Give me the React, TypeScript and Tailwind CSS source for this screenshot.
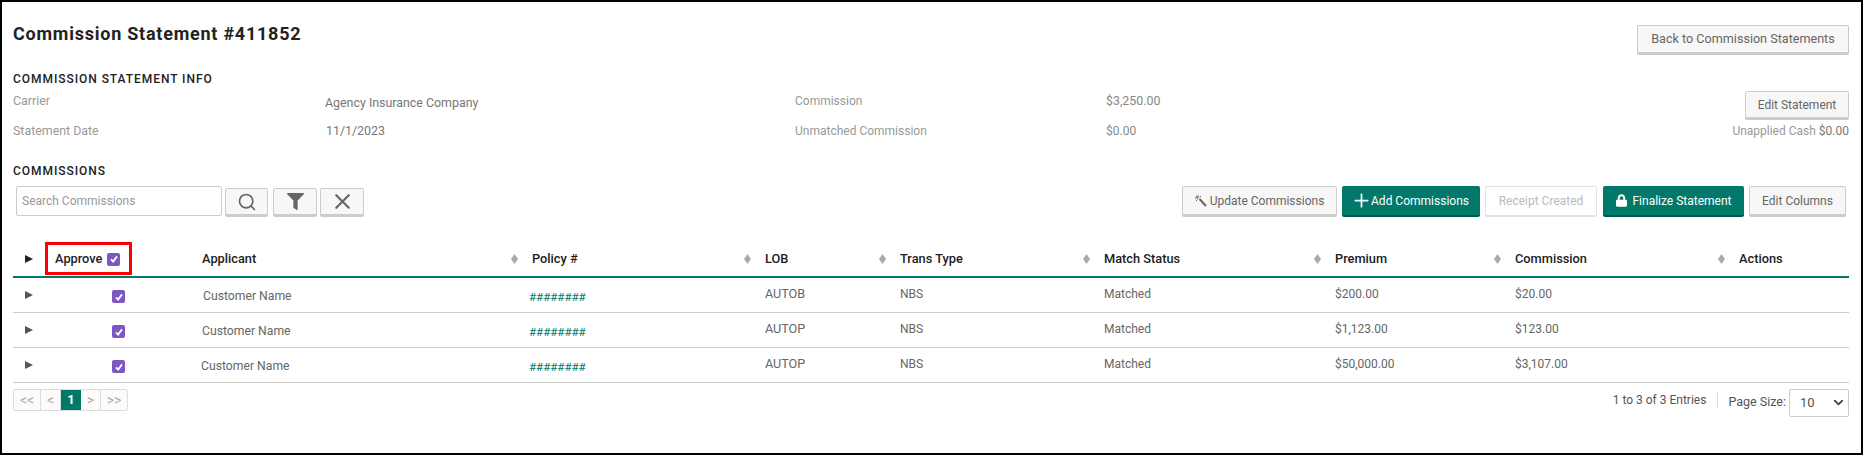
import { ChevronDown, Plus, Search, X } from 'lucide-react'
import type { ReactNode } from 'react'
import { FaFilter, FaLock } from 'react-icons/fa'

const gridCols =
  'grid grid-cols-[42px_147px_330px_233px_135px_204px_231px_180px_224px_1fr]'

const greyBtn =
  'flex items-center justify-center rounded-[2px] border border-b-[3px] border-[#ccc] bg-[#f7f7f7] text-[#666]'
const tealBtn =
  'flex h-[31px] items-center justify-center rounded-[2px] border-b-2 border-[#00594f] bg-[#00796b] text-[12px] text-white'

const rows = [
  { lob: 'AUTOB', premium: '$200.00', commission: '$20.00', nameClass: 'pl-px' },
  { lob: 'AUTOP', premium: '$1,123.00', commission: '$123.00', nameClass: '' },
  { lob: 'AUTOP', premium: '$50,000.00', commission: '$3,107.00', nameClass: '-ml-px' },
]

const Triangle = ({ className }: { className: string }) => (
  <svg viewBox="0 0 8 8" className={className}>
    <path d="M0 0 L8 4 L0 8 Z" fill="currentColor" />
  </svg>
)

const Diamond = () => (
  <svg viewBox="0 0 7 10" className="h-[10px] w-[7px] text-[#aaa]">
    <path d="M3.5 0 L7 5 L3.5 10 L0 5 Z" fill="currentColor" />
  </svg>
)

const Check = () => (
  <span className="flex h-[13px] w-[13px] items-center justify-center rounded-[2px] bg-[#7e57c2]">
    <svg viewBox="0 0 10 10" className="h-[10px] w-[10px]">
      <path d="M2 5.4 L4.1 7.6 L8 2.4" fill="none" stroke="white" strokeWidth="1.8" />
    </svg>
  </span>
)

const Wand = () => (
  <svg viewBox="0 0 12 12" className="h-[12px] w-[12px] text-[#666]">
    <path d="M4.5 4 L11 11" stroke="currentColor" strokeWidth="2" />
    <path d="M3 0 V3 M0 3 H3 M1 1 L3 3 M6 1 L4.5 2.5 M1 6 L2.5 4.5" stroke="currentColor" strokeWidth="1" />
  </svg>
)

const HeadCell = ({ children }: { children: ReactNode }) => (
  <div className="flex items-center justify-between pr-[14px] leading-[34px]">
    <span>{children}</span>
    <Diamond />
  </div>
)

const PageCell = ({ label, className }: { label: string; className: string }) => (
  <span className={`flex items-center justify-center border-r border-[#ddd] text-[14px] text-[#aaa] ${className}`}>
    {label}
  </span>
)

const App = () => {
  return (
    <div className="h-[455px] overflow-hidden border-2 border-black bg-white pl-[11px] pr-[12px] font-[Roboto,sans-serif]">
      <div className="flex items-start justify-between pt-[23px]">
        <h1 className="pt-px text-[18px] font-bold leading-[16px] tracking-[0.76px] text-[#222]">
          Commission Statement #411852
        </h1>
        <button className={`${greyBtn} h-[30px] w-[212px] text-[12.6px]`}>Back to Commission Statements</button>
      </div>

      <h2 className="mt-[16px] text-[12px] font-medium leading-[16px] tracking-[0.95px] text-[#222]">
        COMMISSION STATEMENT INFO
      </h2>

      <div className="mt-[4px] grid grid-cols-[312px_470px_311px_1fr] text-[12px] text-[#999]">
        <div className="h-[29px] pt-px text-[12.4px] leading-[18px]">Carrier</div>
        <div className="pt-[3px] text-[12.4px] leading-[18px] text-[#777]">Agency Insurance Company</div>
        <div className="pt-px leading-[18px]">Commission</div>
        <div className="flex items-start justify-between">
          <span className="pt-px text-[12.4px] leading-[18px] text-[#888]">$3,250.00</span>
          <button className={`${greyBtn} h-[29px] w-[104px] pt-px text-[12px]`}>Edit Statement</button>
        </div>
        <div className="h-[22px] text-[12.4px] leading-[22px]">Statement Date</div>
        <div className="pl-px text-[12.4px] leading-[22px] text-[#777]">11/1/2023</div>
        <div className="leading-[22px]">Unmatched Commission</div>
        <div className="flex justify-between leading-[22px]">
          <span className="text-[#888]">$0.00</span>
          <span>
            Unapplied Cash <span className="text-[#777]">$0.00</span>
          </span>
        </div>
      </div>

      <h2 className="mt-[21px] text-[12px] font-medium leading-[16px] tracking-[0.95px] text-[#222]">
        COMMISSIONS
      </h2>

      <div className="mr-[3px] mt-[7px] flex items-start justify-between">
        <div className="ml-[3px] flex items-start">
          <input
            placeholder="Search Commissions"
            className="h-[30px] w-[206px] rounded-[2px] border border-[#ccc] px-[5px] text-[12px] placeholder:text-[#999]"
          />
          <button className={`${greyBtn} ml-[3px] mt-[2px] h-[29px] w-[43px]`}>
            <Search className="h-[20px] w-[20px]" strokeWidth={2} />
          </button>
          <button className={`${greyBtn} ml-[5px] mt-[2px] h-[29px] w-[44px]`}>
            <FaFilter className="h-[17px] w-[17px]" />
          </button>
          <button className={`${greyBtn} ml-[3px] mt-[2px] h-[29px] w-[44px]`}>
            <X className="h-[25px] w-[25px]" strokeWidth={2.1} />
          </button>
        </div>
        <div className="flex items-start">
          <button className={`${greyBtn} h-[31px] w-[155px] gap-[3px] text-[12px]`}>
            <Wand />
            Update Commissions
          </button>
          <button className={`${tealBtn} ml-[5px] w-[138px] pr-[2px]`}>
            <Plus className="-mr-[1px] h-[21px] w-[21px]" strokeWidth={2} />
            Add Commissions
          </button>
          <button className="ml-[5px] flex h-[31px] w-[112px] items-center justify-center rounded-[2px] border border-b-2 border-[#e2e2e2] bg-white text-[12px] text-[#bbb]">
            Receipt Created
          </button>
          <button className={`${tealBtn} ml-[6px] w-[141px] gap-[5px] pl-px text-[11.6px]`}>
            <FaLock className="h-[13px] w-[11px]" />
            Finalize Statement
          </button>
          <button className={`${greyBtn} ml-[5px] h-[31px] w-[97px] text-[12px]`}>Edit Columns</button>
        </div>
      </div>

      <div className={`${gridCols} mt-[25px] h-[36px] border-b-2 border-[#00796b] text-[12.8px] font-medium text-[#222]`}>
        <div className="pl-[12px] pt-[13px]">
          <Triangle className="h-[8px] w-[8px] text-[#222]" />
        </div>
        <div className="relative flex h-[34px] items-center gap-[5px]">
          <span>Approve</span>
          <Check />
          <div className="absolute -left-[10px] top-0 h-[33px] w-[87px] border-[3px] border-[#f00]" />
        </div>
        <HeadCell>Applicant</HeadCell>
        <HeadCell>Policy #</HeadCell>
        <HeadCell>LOB</HeadCell>
        <HeadCell>Trans Type</HeadCell>
        <HeadCell>Match Status</HeadCell>
        <HeadCell>Premium</HeadCell>
        <HeadCell>Commission</HeadCell>
        <div className="leading-[34px]">Actions</div>
      </div>

      {rows.map((row, i) => (
        <div key={i} className={`${gridCols} h-[35px] border-b border-[#ccc] text-[12px] text-[#666]`}>
          <div className="pl-[12px] pt-[13px]">
            <Triangle className="h-[8px] w-[8px] text-[#555]" />
          </div>
          <div className="pl-[57px] pt-[12px]">
            <Check />
          </div>
          <div className={`pt-[9px] text-[12.2px] leading-[18px] ${row.nameClass}`}>Customer Name</div>
          <div className="-ml-[3px] pt-[10px] text-[11.5px] leading-[18px] text-[#00796b]">########</div>
          <div className="pt-[7px] text-[12.6px] leading-[18px]">{row.lob}</div>
          <div className="pt-[7px] leading-[18px]">NBS</div>
          <div className="pt-[7px] leading-[18px]">Matched</div>
          <div className="pt-[7px] leading-[18px]">{row.premium}</div>
          <div className="pt-[7px] leading-[18px]">{row.commission}</div>
          <div />
        </div>
      ))}

      <div className="mt-[6px] flex items-start justify-between">
        <div className="flex h-[22px] rounded-[2px] border border-[#ddd] bg-[#fbfbfb]">
          <PageCell label="<<" className="w-[27px]" />
          <PageCell label="<" className="w-[20px]" />
          <span className="flex w-[20px] items-center justify-center bg-[#00796b] text-[13px] font-bold text-white">1</span>
          <PageCell label=">" className="w-[20px]" />
          <PageCell label=">>" className="w-[26px] border-r-0" />
        </div>
        <div className="flex items-start text-[12px] text-[#555]">
          <span className="leading-[22px]">1 to 3 of 3 Entries</span>
          <span className="ml-[11px] mt-[2px] h-[18px] w-px bg-[#ddd]" />
          <span className="ml-[10px] mr-[3px] text-[12.5px] leading-[26px]">Page Size:</span>
          <div className="relative">
            <select className="h-[28px] w-[60px] appearance-none rounded-[2px] border border-[#ccc] bg-white pl-[10px] text-[13px] text-[#555]">
              <option>10</option>
            </select>
            <ChevronDown className="absolute right-[3px] top-[6px] h-[15px] w-[15px] text-[#444]" strokeWidth={3} />
          </div>
        </div>
      </div>
    </div>
  )
}

export default App
